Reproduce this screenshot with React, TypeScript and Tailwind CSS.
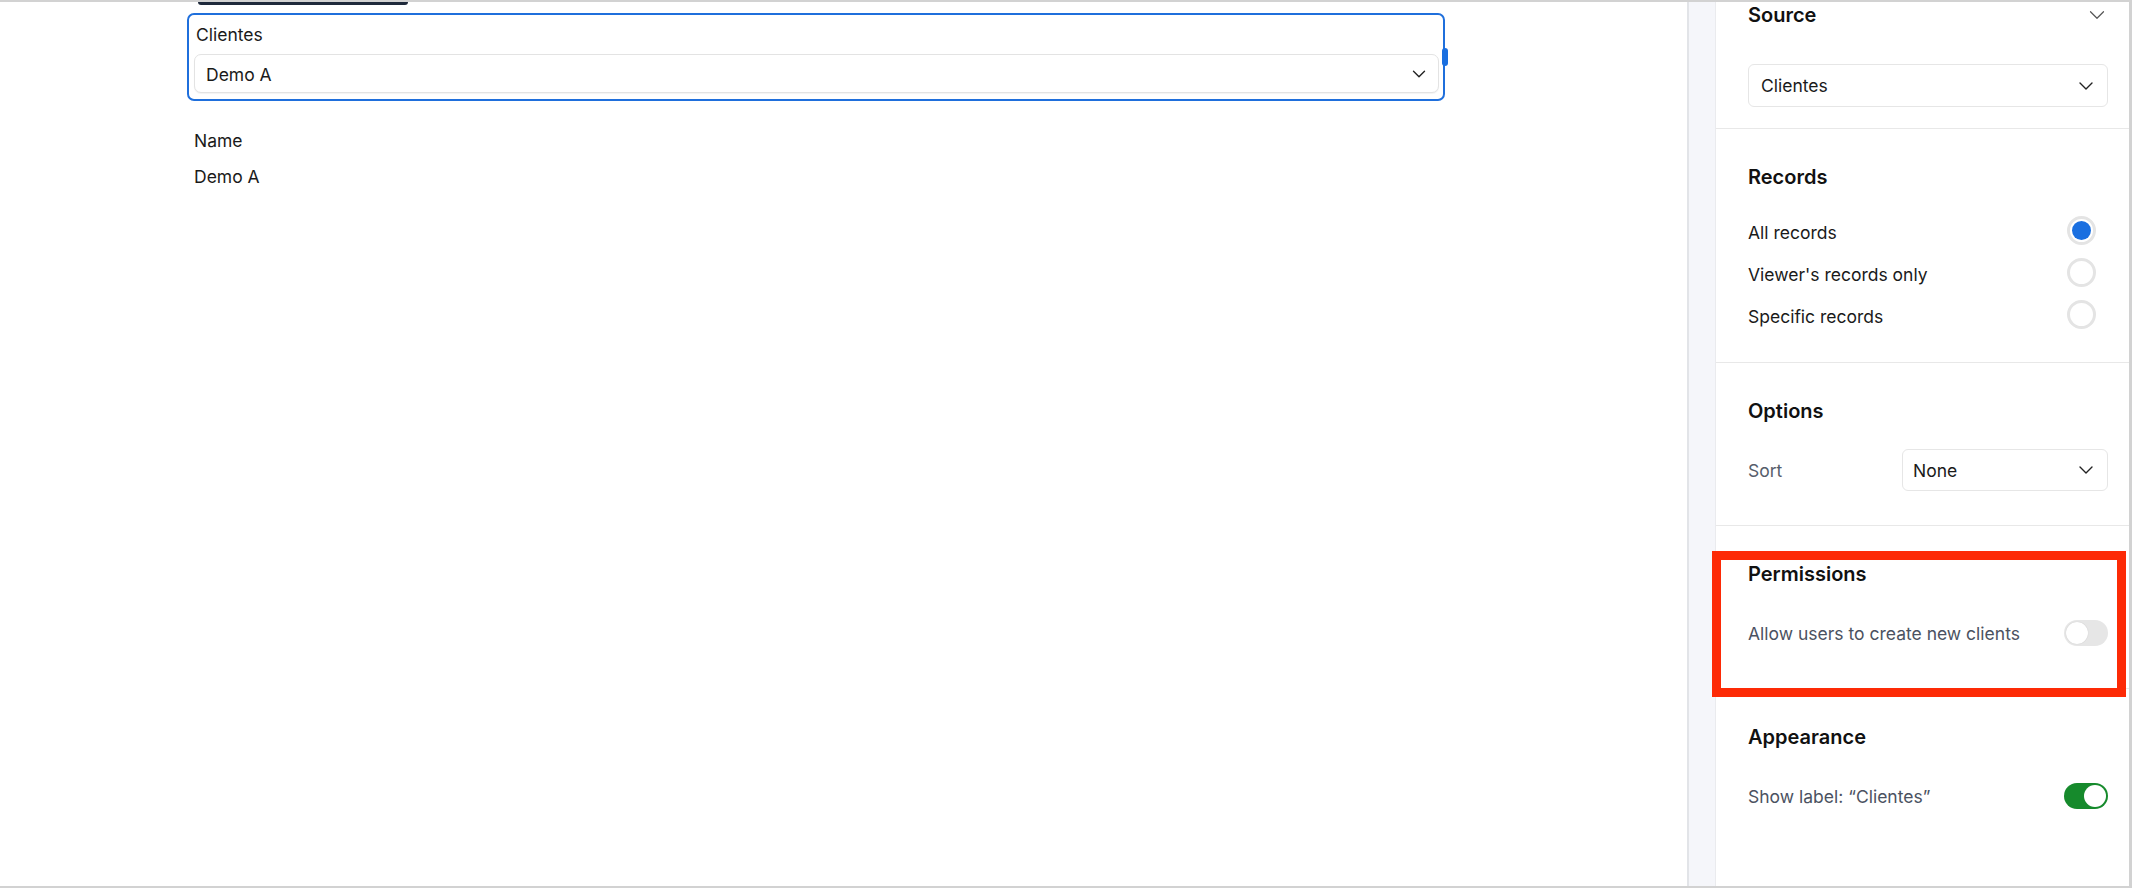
import React from 'react';
import { ChevronDown } from 'lucide-react';

function Toggle({ on }: { on: boolean }) {
  return on ? (
    <div className="w-[44px] h-[26px] rounded-full bg-[#168a2c] flex items-center justify-end px-[2px]">
      <div className="w-[22px] h-[22px] rounded-full bg-white" />
    </div>
  ) : (
    <div className="w-[44px] h-[26px] rounded-full bg-[#e6e6e6] flex items-center px-[2px]">
      <div className="w-[22px] h-[22px] rounded-full bg-white shadow-[0_0_1px_rgba(0,0,0,0.2)]" />
    </div>
  );
}

function Radio({ checked }: { checked: boolean }) {
  return (
    <div className="w-[29px] h-[29px] rounded-full border-[3px] border-[#e4e4e4] bg-white flex items-center justify-center mr-[12px]">
      {checked && <div className="w-[19px] h-[19px] rounded-full bg-[#1a6fe0]" />}
    </div>
  );
}

function SectionTitle({ children }: { children: React.ReactNode }) {
  return <div className="h-[28px] leading-[28px] text-[20px] font-semibold text-[#111]">{children}</div>;
}

export default function App() {
  return (
    <div
      className="w-[2132px] h-[888px] flex bg-white border-t-2 border-b-2 border-r-[3px] border-[#d2d2d2] overflow-hidden"
      style={{ fontFamily: 'Inter, "Noto Sans", sans-serif' }}
    >
      {/* Canvas */}
      <div className="w-[1687px] h-full bg-white pl-[187px]">
        <div className="ml-[11px] w-[210px] h-[3px] rounded-b-[4px] bg-[#1e293b]" />
        <div className="relative mt-[8px] w-[1258px] h-[88px] border-2 border-[#1f6fdc] rounded-[7px] pl-[5px] pr-[4px] pt-[6px]">
          <div className="h-[24px] leading-[24px] text-[17.5px] text-[#1a1a1a] pl-[2px] pt-[2px]">Clientes</div>
          <div className="mt-[9px] h-[39px] border border-[#e3e3e3] rounded-[7px] bg-white shadow-[0_1px_1px_rgba(0,0,0,0.05)] flex items-center justify-between pl-[11px] pr-[8px]">
            <span className="text-[17.5px] text-[#1a1a1a] pt-[3px]">Demo A</span>
            <ChevronDown size={22} strokeWidth={1.5} className="text-[#222]" />
          </div>
          <div className="absolute right-[-5px] top-[33px] w-[6px] h-[18px] rounded-full bg-[#1a6fe0]" />
        </div>
        <div className="mt-[28px] pl-[7px] h-[24px] leading-[24px] text-[17.5px] text-[#1a1a1a]">Name</div>
        <div className="mt-[12px] pl-[7px] h-[24px] leading-[24px] text-[17.5px] text-[#1a1a1a]">Demo A</div>
      </div>

      <div className="w-[2px] h-full bg-[#e2e4e8]" />
      <div className="w-[26px] h-full bg-[#f5f6fa] border-r border-[#eaebee] box-content" />

      {/* Right panel */}
      <div className="flex-1 h-full bg-white flex flex-col">
        {/* Source */}
        <div className="pl-[32px] pr-[21px] pb-[21px] border-b border-[#e8e8e8]">
          <div className="-mt-[1px] flex items-center justify-between">
            <SectionTitle>Source</SectionTitle>
            <ChevronDown size={26} strokeWidth={1.1} className="text-[#555] mr-[-2px]" />
          </div>
          <div className="mt-[35px] h-[43px] border border-[#e6e6e6] rounded-[6px] flex items-center justify-between pl-[12px] pr-[9px]">
            <span className="text-[17.5px] text-[#1a1a1a] pt-[2px]">Clientes</span>
            <ChevronDown size={24} strokeWidth={1.4} className="text-[#222]" />
          </div>
        </div>

        {/* Records */}
        <div className="pl-[32px] pr-[21px] pt-[34px] pb-[27px] border-b border-[#e8e8e8]">
          <SectionTitle>Records</SectionTitle>
          <div className="mt-[18px] flex flex-col">
            {[
              ['All records', true],
              ["Viewer's records only", false],
              ['Specific records', false],
            ].map(([label, checked]) => (
              <div key={label as string} className="h-[42px] flex items-center justify-between">
                <span className="text-[17.5px] text-[#1a1a1a] pt-[6px]">{label as string}</span>
                <Radio checked={checked as boolean} />
              </div>
            ))}
          </div>
        </div>

        {/* Options */}
        <div className="pl-[32px] pr-[21px] pt-[34px] pb-[34px] border-b border-[#e8e8e8]">
          <SectionTitle>Options</SectionTitle>
          <div className="mt-[24px] h-[42px] flex items-center justify-between">
            <span className="text-[17.5px] text-[#565d6b] pt-[2px]">Sort</span>
            <div className="w-[206px] h-[42px] border border-[#e6e6e6] rounded-[6px] flex items-center justify-between pl-[10px] pr-[9px]">
              <span className="text-[17.5px] text-[#1a1a1a] pt-[2px]">None</span>
              <ChevronDown size={24} strokeWidth={1.4} className="text-[#222]" />
            </div>
          </div>
        </div>

        {/* Permissions */}
        <div className="relative pl-[32px] pr-[21px] pt-[34px] pb-[34px] border-b border-[#e8e8e8]">
          <SectionTitle>Permissions</SectionTitle>
          <div className="mt-[24px] h-[42px] flex items-center justify-between">
            <span className="text-[17.5px] text-[#4b5261] pt-[2px]">Allow users to create new clients</span>
            <Toggle on={false} />
          </div>
          <div className="absolute left-[-4px] right-[3px] top-[25px] bottom-[-9px] border-[9px] border-[#fd2a06] pointer-events-none" />
        </div>

        {/* Appearance */}
        <div className="pl-[32px] pr-[21px] pt-[34px]">
          <SectionTitle>Appearance</SectionTitle>
          <div className="mt-[24px] h-[42px] flex items-center justify-between">
            <span className="text-[17.5px] text-[#4b5261] pt-[2px]">Show label: “Clientes”</span>
            <Toggle on={true} />
          </div>
        </div>
      </div>
    </div>
  );
}
